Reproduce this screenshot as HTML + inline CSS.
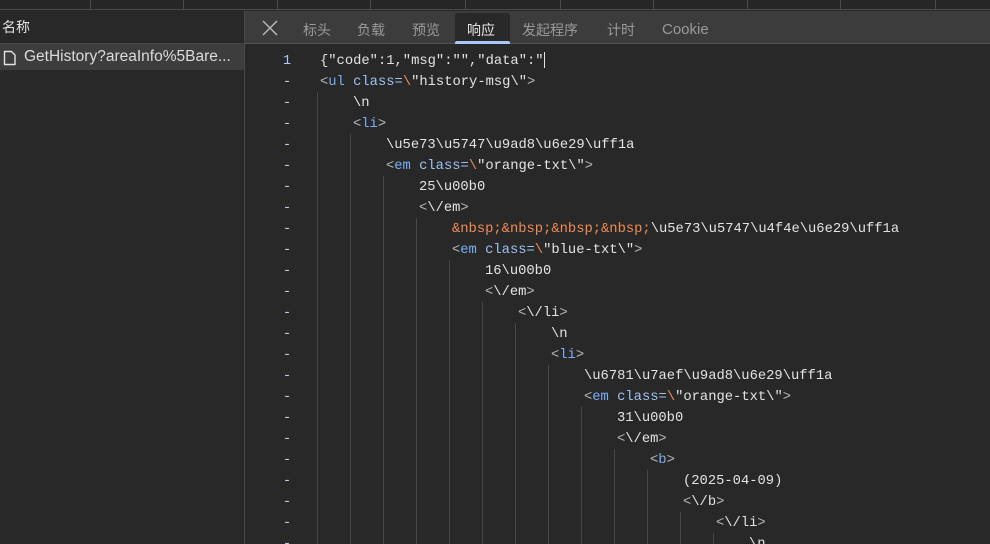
<!DOCTYPE html>
<html><head><meta charset="utf-8"><style>
*{margin:0;padding:0;box-sizing:border-box}
html,body{width:990px;height:544px;overflow:hidden}
body{background:#282828;position:relative;font-family:"Liberation Sans","Noto Sans CJK SC",sans-serif}
.a{position:absolute}
.top{left:0;top:0;width:990px;height:10px;background:#262626;border-bottom:1px solid #4a4a4a}
.vl{position:absolute;top:0;width:1px;height:10px;background:#4a4a4a}
.tab{position:absolute;top:20px;font-size:14px;color:#9a9a9a;line-height:20px}
.code{font-family:"Liberation Mono",monospace;font-size:13.8px;color:#e3e3e3;white-space:pre;line-height:21px;height:21px}
.num{font-family:"Liberation Mono",monospace;font-size:13.8px;color:#a8c7fa;line-height:21px;width:30px;text-align:center;left:272px}
.g{position:absolute;width:1px;background:#474747;bottom:0}
.t{color:#7cacf8}.c{color:#9ec1f3}.o{color:#f28b54}.p{color:#b8b8b8}
</style></head><body>
<div class="a top">
<div class="vl" style="left:90px"></div><div class="vl" style="left:183px"></div><div class="vl" style="left:277px"></div><div class="vl" style="left:370px"></div><div class="vl" style="left:465px"></div><div class="vl" style="left:560px"></div><div class="vl" style="left:653px"></div><div class="vl" style="left:747px"></div><div class="vl" style="left:840px"></div><div class="vl" style="left:935px"></div>
</div>
<div class="a" style="left:0;top:11px;width:244px;height:33px;background:#282828;border-bottom:1px solid #444"></div>
<div class="a" style="left:2px;top:17px;font-size:14px;color:#e3e3e3;line-height:20px">名称</div>
<div class="a" style="left:0;top:44px;width:244px;height:26px;background:#3d3d3d"></div>
<svg class="a" style="left:3px;top:50px" width="14" height="16" viewBox="0 0 14 16"><path d="M1.5 1.5h7l3.5 3.5v9.5h-10.5z" fill="none" stroke="#e3e3e3" stroke-width="1.4" stroke-linejoin="round"/></svg>
<div class="a" style="left:24px;top:47px;font-size:15.5px;color:#dcdcdc;line-height:20px">GetHistory?areaInfo%5Bare...</div>
<div class="a" style="left:244px;top:11px;width:1px;height:533px;background:#4a4a4a"></div>
<div class="a" style="left:245px;top:11px;width:745px;height:33px;background:#3c3c3c;border-bottom:1px solid #555"></div>
<svg class="a" style="left:261px;top:19px" width="18" height="18" viewBox="0 0 18 18"><path d="M2 2L16 16M16 2L2 16" stroke="#bdbdbd" stroke-width="1.4"/></svg>
<div class="tab" style="left:303px">标头</div>
<div class="tab" style="left:357px">负载</div>
<div class="tab" style="left:412px">预览</div>
<div class="a" style="left:455px;top:13px;width:55px;height:31px;background:#282828;border-radius:3px 3px 0 0"></div>
<div class="a" style="left:455px;top:41px;width:55px;height:3px;background:#a8c7fa;border-radius:2px 2px 0 0"></div>
<div class="tab" style="left:467px;color:#e8e8e8">响应</div>
<div class="tab" style="left:522px">发起程序</div>
<div class="tab" style="left:607px">计时</div>
<div class="tab" style="left:662px;font-size:15px">Cookie</div>
<div class="g" style="left:317px;top:92px"></div>
<div class="g" style="left:350px;top:134px"></div>
<div class="g" style="left:383px;top:176px"></div>
<div class="g" style="left:416px;top:218px"></div>
<div class="g" style="left:449px;top:260px"></div>
<div class="g" style="left:482px;top:302px"></div>
<div class="g" style="left:515px;top:323px"></div>
<div class="g" style="left:548px;top:365px"></div>
<div class="g" style="left:581px;top:407px"></div>
<div class="g" style="left:614px;top:449px"></div>
<div class="g" style="left:647px;top:470px"></div>
<div class="g" style="left:680px;top:512px"></div>
<div class="g" style="left:713px;top:533px"></div>
<div class="a num" style="top:51px">1</div>
<div class="a num" style="top:72px;height:472px;overflow:hidden;color:#b9cff0">-<br>-<br>-<br>-<br>-<br>-<br>-<br>-<br>-<br>-<br>-<br>-<br>-<br>-<br>-<br>-<br>-<br>-<br>-<br>-<br>-<br>-<br>-</div>
<div class="a code" style="left:320px;top:51px">{"code":1,"msg":"","data":"<span style="display:inline-block;width:1px;height:16px;background:#e3e3e3;vertical-align:middle"></span></div>
<div class="a code" style="left:320px;top:72px"><span class="p">&lt;</span><span class="t">ul</span> <span class="c">class=</span><span class="o">\</span>"history-msg\"<span class="p">&gt;</span></div>
<div class="a code" style="left:353px;top:93px">\n</div>
<div class="a code" style="left:353px;top:114px"><span class="p">&lt;</span><span class="t">li</span><span class="p">&gt;</span></div>
<div class="a code" style="left:386px;top:135px">\u5e73\u5747\u9ad8\u6e29\uff1a</div>
<div class="a code" style="left:386px;top:156px"><span class="p">&lt;</span><span class="t">em</span> <span class="c">class=</span><span class="o">\</span>"orange-txt\"<span class="p">&gt;</span></div>
<div class="a code" style="left:419px;top:177px">25\u00b0</div>
<div class="a code" style="left:419px;top:198px"><span class="p">&lt;</span>\/em<span class="p">&gt;</span></div>
<div class="a code" style="left:452px;top:219px"><span class="o">&amp;nbsp;&amp;nbsp;&amp;nbsp;&amp;nbsp;</span>\u5e73\u5747\u4f4e\u6e29\uff1a</div>
<div class="a code" style="left:452px;top:240px"><span class="p">&lt;</span><span class="t">em</span> <span class="c">class=</span><span class="o">\</span>"blue-txt\"<span class="p">&gt;</span></div>
<div class="a code" style="left:485px;top:261px">16\u00b0</div>
<div class="a code" style="left:485px;top:282px"><span class="p">&lt;</span>\/em<span class="p">&gt;</span></div>
<div class="a code" style="left:518px;top:303px"><span class="p">&lt;</span>\/li<span class="p">&gt;</span></div>
<div class="a code" style="left:551px;top:324px">\n</div>
<div class="a code" style="left:551px;top:345px"><span class="p">&lt;</span><span class="t">li</span><span class="p">&gt;</span></div>
<div class="a code" style="left:584px;top:366px">\u6781\u7aef\u9ad8\u6e29\uff1a</div>
<div class="a code" style="left:584px;top:387px"><span class="p">&lt;</span><span class="t">em</span> <span class="c">class=</span><span class="o">\</span>"orange-txt\"<span class="p">&gt;</span></div>
<div class="a code" style="left:617px;top:408px">31\u00b0</div>
<div class="a code" style="left:617px;top:429px"><span class="p">&lt;</span>\/em<span class="p">&gt;</span></div>
<div class="a code" style="left:650px;top:450px"><span class="p">&lt;</span><span class="t">b</span><span class="p">&gt;</span></div>
<div class="a code" style="left:683px;top:471px">(2025-04-09)</div>
<div class="a code" style="left:683px;top:492px"><span class="p">&lt;</span>\/b<span class="p">&gt;</span></div>
<div class="a code" style="left:716px;top:513px"><span class="p">&lt;</span>\/li<span class="p">&gt;</span></div>
<div class="a code" style="left:749px;top:534px;height:10px;overflow:hidden">\n</div>
</body></html>
